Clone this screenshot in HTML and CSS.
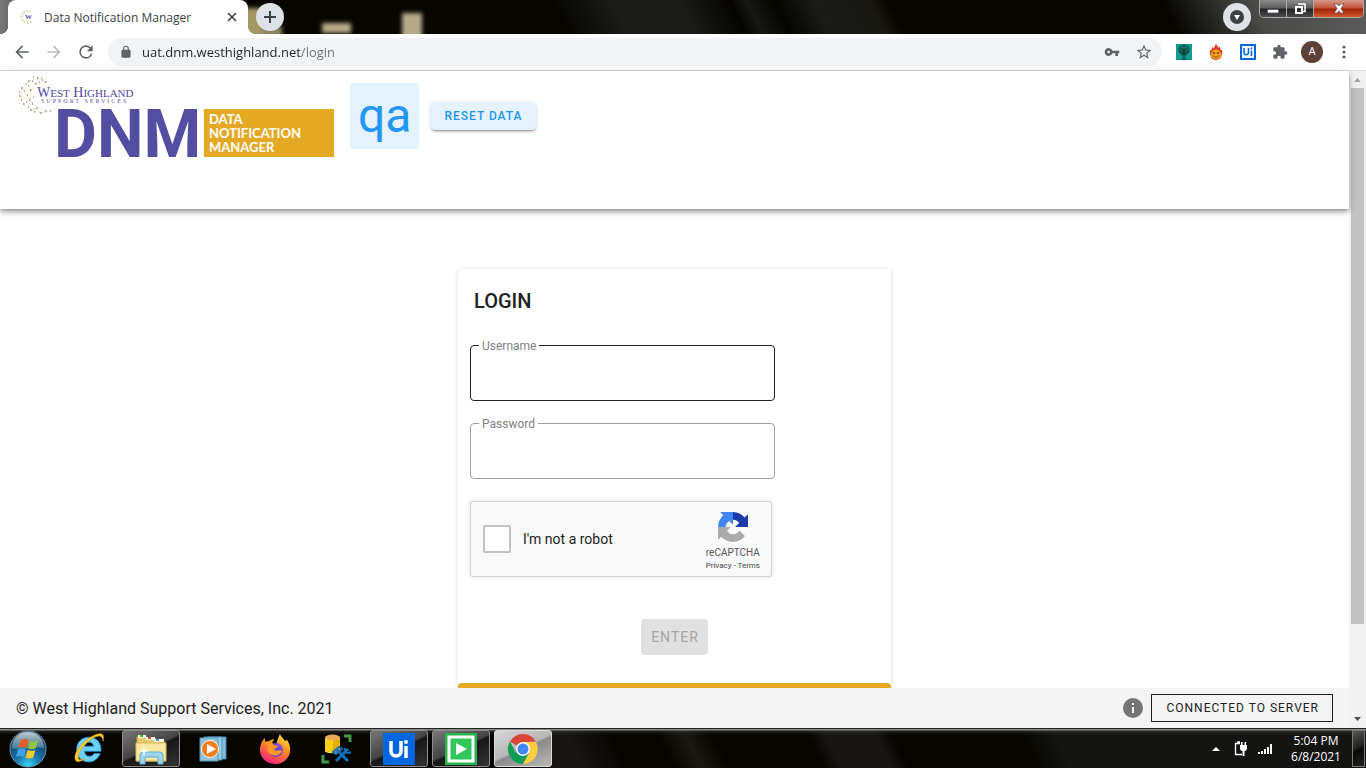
FILE: index.html
```html
<!DOCTYPE html>
<html lang="en">
<head>
<meta charset="utf-8">
<title>Data Notification Manager</title>
<link rel="stylesheet" href="styles.css">
</head>
<body>
<div class="titlebar">
  <svg class="glass" width="480" height="34" aria-hidden="true">
    <defs><filter id="soft"><feGaussianBlur stdDeviation="2"/></filter></defs>
    <g filter="url(#soft)" fill="#b5ab8b">
      <rect x="240" y="8" width="22" height="30" fill="#a39765"/>
      <rect x="262" y="26" width="20" height="12" fill="#8d8566"/>
      <rect x="322" y="23" width="29" height="10"/>
      <rect x="402" y="13" width="20" height="26"/>
    </g>
  </svg>
  <div class="tab">
    <svg class="favicon" viewBox="0 0 16 16" aria-hidden="true">
      <path d="M11 3A6 6 0 1 0 12 12" fill="none" stroke="#e4d6b0" stroke-width="2" stroke-dasharray="2 1"/>
      <text x="5" y="10" class="favicon-letter">W</text>
    </svg>
    <span class="tab-title">Data Notification Manager</span>
    <button class="tab-close" type="button" aria-label="Close tab">
      <svg width="10" height="10" viewBox="0 0 10 10"><path d="M1 1l8 8M9 1l-8 8" stroke="#3c4043" stroke-width="1.600"/></svg>
    </button>
  </div>
  <button class="round-button" type="button" aria-label="New tab">
    <svg width="14" height="14" viewBox="0 0 14 14"><path d="M7 1v12M1 7h12" stroke="#3c4043" stroke-width="2"/></svg>
  </button>
  <button class="round-button tab-search" type="button" aria-label="Search tabs">
    <svg width="14" height="14" viewBox="0 0 14 14"><circle cx="7" cy="7" r="7" fill="#3c4043"/><path d="M4 5h6l-3 5z" fill="#fff"/></svg>
  </button>
  <div class="window-controls">
    <button class="window-button" type="button" aria-label="Minimize">
      <svg width="14" height="14" viewBox="0 0 14 14"><path d="M1.500 7.500h11v3.500h-11z" fill="#fff" stroke="#555966" stroke-width=".8"/></svg>
    </button>
    <button class="window-button" type="button" aria-label="Restore">
      <svg width="14" height="14" viewBox="0 0 14 14"><path d="M5 2h7v7.500h-2" fill="none" stroke="#fff" stroke-width="1.500"/><path d="M3 5h6v6h-6z" fill="none" stroke="#fff" stroke-width="2"/></svg>
    </button>
    <button class="window-button window-close" type="button" aria-label="Close">
      <svg width="14" height="14" viewBox="0 0 14 14"><path d="M2 2h3.500l1.500 2 1.500-2h3.500l-3 4.500 3 4.500h-3.500l-1.500-2-1.500 2h-3.500l3-4.500z" fill="#fff" stroke="#5c3a3a" stroke-width=".7"/></svg>
    </button>
  </div>
</div>

<div class="toolbar">
  <button class="tool" type="button" aria-label="Back"><svg width="20" height="20" viewBox="0 0 24 24" fill="#5f6368"><path d="M20 11H7.830l5.590-5.590L12 4l-8 8 8 8 1.410-1.410L7.830 13H20v-2z"/></svg></button>
  <button class="tool" type="button" aria-label="Forward"><svg width="20" height="20" viewBox="0 0 24 24" fill="#babcbe"><path d="M12 4l-1.410 1.410L16.170 11H4v2h12.170l-5.580 5.590L12 20l8-8z"/></svg></button>
  <button class="tool" type="button" aria-label="Reload"><svg width="20" height="20" viewBox="0 0 24 24" fill="#5f6368"><path d="M17.650 6.350A7.960 7.960 0 0 0 12 4a8 8 0 1 0 7.730 10h-2.080A6 6 0 1 1 12 6c1.660 0 3.140.69 4.220 1.780L13 11h7V4z"/></svg></button>
  <div class="omnibox">
    <svg width="16" height="16" viewBox="-2 -2 28 28" fill="#5f6368" aria-hidden="true"><path d="M18 8h-1V6A5 5 0 0 0 7 6v2H6a2 2 0 0 0-2 2v10c0 1.100.9 2 2 2h12a2 2 0 0 0 2-2V10a2 2 0 0 0-2-2zM9 6a3 3 0 0 1 6 0v2H9z"/></svg>
    <input class="address" type="text" aria-label="Address" value="uat.dnm.westhighland.net/login">
    <button class="tool" type="button" aria-label="Saved passwords"><svg width="16" height="16" viewBox="0 0 24 24" fill="#5f6368"><path d="M12.650 10A6 6 0 1 0 12.650 14H17v4h4v-4h2v-4zM7 14a2 2 0 1 1 0-4 2 2 0 0 1 0 4z"/></svg></button>
    <button class="tool" type="button" aria-label="Bookmark"><svg width="18" height="18" viewBox="0 0 24 24" fill="#5f6368"><path d="M22 9.240l-7.190-.62L12 2 9.190 8.630 2 9.240l5.460 4.730L5.820 21 12 17.270 18.180 21l-1.630-7.030zM12 15.400l-3.760 2.270 1-4.280-3.320-2.880 4.380-.38L12 6.100l1.710 4.040 4.380.38-3.320 2.880 1 4.280z"/></svg></button>
  </div>
  <button class="tool" type="button" aria-label="Tree extension">
    <svg width="16" height="16" viewBox="0 0 16 16"><path d="M0 0h16v16H0z" fill="#109c93"/><circle cx="8" cy="6" r="5" fill="#0b7c72" stroke="#0d3b33"/><path d="M8 3v12M5 4l3 4 3-4M4 7l4 3 4-3M5.500 15h5" stroke="#0b2c28" fill="none"/></svg>
  </button>
  <button class="tool" type="button" aria-label="Flame extension">
    <svg width="16" height="16" viewBox="0 0 16 16"><path d="M8 0c1 2 2 2 2.500 4L12 2.500 12.500 6 14 6c.5 5-1 10-6 10S1.500 11 2 6l1.500.5L4 3l2 1.500C6 3 7 2 8 0z" fill="#e6361d"/><circle cx="8" cy="10.500" r="5" fill="#f8a51d"/><circle cx="6" cy="9" r="1" fill="#532"/><circle cx="10" cy="9" r="1" fill="#532"/><path d="M5 11.500c1.500 2.500 4.500 2.500 6 0" fill="none" stroke="#743013"/></svg>
  </button>
  <button class="tool" type="button" aria-label="UiPath extension">
    <svg width="16" height="16" viewBox="0 0 16 16"><path d="M1 1h14v14H1z" fill="#fff" stroke="#0067df" stroke-width="2"/><path d="M4 4v5a2.300 2.300 0 0 0 4.500 0V4M11.500 6.500V12M11.500 3.500v1.700" fill="none" stroke="#0067df" stroke-width="1.600"/></svg>
  </button>
  <button class="tool" type="button" aria-label="Extensions"><svg width="16" height="16" viewBox="0 0 24 24" fill="#5f6368"><path d="M20.500 11H19V7c0-1.100-.9-2-2-2h-4V3.500a2.500 2.500 0 0 0-5 0V5H4c-1.100 0-2 .9-2 2v3.800h1.500a2.700 2.700 0 0 1 0 5.400H2V20c0 1.100.9 2 2 2h3.800v-1.500a2.700 2.700 0 0 1 5.400 0V22H17a2 2 0 0 0 2-2v-4h1.500a2.500 2.500 0 0 0 0-5z"/></svg></button>
  <button class="tool" type="button" aria-label="Profile"><span class="avatar">A</span></button>
  <button class="tool" type="button" aria-label="Menu"><svg width="4" height="14" viewBox="0 0 4 14" fill="#5f6368"><circle cx="2" cy="2" r="1.600"/><circle cx="2" cy="7" r="1.600"/><circle cx="2" cy="12" r="1.600"/></svg></button>
</div>

<div class="viewport">
  <div class="page">
    <header class="app-header">
      <svg class="logo" width="319" height="84" viewBox="16 74 319 84" role="img" aria-label="West Highland Support Services DNM Data Notification Manager">
        <path d="M46 82L38 78 29 81 22 88 20 96 24 104 31 110 41 113 51 111M46 82L36 84 29 81 31 91 22 88M20 96l10 4 1-9 5-7M24 104l6-4 7 8-6 2M37 108l9 2M22 88l8 12M38 78l-2 6M31 110l6-2" fill="none" stroke="#eee0b0" stroke-width=".7"/>
        <path d="M45 82h1.500M37 78h1.500M33 77h1M42 80h1M41 78h1M28 81h1.500M32 81h1M26 84h1M21 88h1.500M30 90h1.500M24 91h1M27 95h1M19 96h1.500M19 92h1M29 100h1.500M33 97h1M23 104h1.500M26 102h1M30 110h1.500M28 107h1M36 108h1.500M34 112h1M40 113h1.500M45 111h1.500M50 111h1M35 84h1.500M39 82h1M21 100h1M28 86h1M32 104h1" stroke="#5f588c" stroke-width="1.200"/>
        <text class="logo-company" x="37" y="97">W<tspan class="logo-small">EST</tspan> H<tspan class="logo-small">IGHLAND</tspan></text>
        <text class="logo-services" x="41" y="103">SUPPORT SERVICES</text>
        <text class="logo-mark" x="54" y="157">DNM</text>
        <path d="M204 109h130v48H204z" fill="#e5a823"/>
        <g class="logo-words"><text x="209" y="124">DATA</text><text x="209" y="138">NOTIFICATION</text><text x="209" y="152">MANAGER</text></g>
      </svg>
      <span class="env">qa</span>
      <button class="btn btn-reset" type="button">RESET DATA</button>
    </header>
    <main class="content">
      <form class="card">
        <h1 class="card-title">LOGIN</h1>
        <div class="fields">
          <div class="field field-active">
            <label class="field-label" for="username">Username</label>
            <input class="field-input" id="username" type="text">
          </div>
          <div class="field">
            <label class="field-label" for="password">Password</label>
            <input class="field-input" id="password" type="password">
          </div>
          <div class="captcha">
            <input class="captcha-box" id="robot" type="checkbox">
            <label class="captcha-label" for="robot">I'm not a robot</label>
            <div class="captcha-brand">
              <svg width="30" height="30" viewBox="0 0 64 64" aria-hidden="true">
                <path fill="#1c3aa9" d="M64 31.955l-.033-1.370V4.687l-7.160 7.160C50.948 4.674 42.033.093 32.050.093c-10.400 0-19.630 4.960-25.474 12.640l11.736 11.860a15.550 15.550 0 0 1 4.754-5.334c2.050-1.600 4.952-2.906 8.968-2.906.485 0 .86.057 1.135.163 4.976.393 9.288 3.140 11.828 7.124l-8.307 8.307z"/>
                <path fill="#4285f4" d="M31.862.094l-1.370.033H4.594l7.160 7.160C4.580 13.147 0 22.060 0 32.046c0 10.400 4.960 19.630 12.640 25.474L24.500 45.784a15.550 15.550 0 0 1-5.334-4.754c-1.600-2.050-2.906-4.952-2.906-8.968 0-.485.057-.86.163-1.135.393-4.976 3.140-9.288 7.124-11.828l8.307 8.307z"/>
                <path fill="#ababab" d="M.001 32.045l.033 1.370v25.898l7.160-7.160c5.860 7.173 14.774 11.754 24.760 11.754 10.400 0 19.630-4.960 25.474-12.640l-11.736-11.860a15.550 15.550 0 0 1-4.754 5.334c-2.050 1.600-4.952 2.906-8.968 2.906-.485 0-.86-.057-1.135-.163-4.976-.393-9.288-3.140-11.828-7.124l8.307-8.307z"/>
              </svg>
              <span class="captcha-name">reCAPTCHA</span>
              <span class="captcha-links"><a href="#privacy">Privacy</a> - <a href="#terms">Terms</a></span>
            </div>
          </div>
        </div>
        <button class="btn btn-enter" type="submit" disabled>ENTER</button>
        <div class="card-strip"></div>
      </form>
    </main>
    <footer class="app-footer">
      <span>© West Highland Support Services, Inc. 2021</span>
      <svg class="info" width="20" height="20" viewBox="0 0 20 20" aria-hidden="true"><circle cx="10" cy="10" r="10" fill="#757575"/><path d="M9 5h2v2H9zM9 9h2v6H9z" fill="#f4f4f4"/></svg>
      <button class="btn btn-server" type="button">CONNECTED TO SERVER</button>
    </footer>
  </div>
  <div class="scrollbar" aria-hidden="true">
    <svg width="17" height="17" viewBox="0 0 17 17"><path d="M5 11l3.500-4 3.500 4z" fill="#a3a3a3"/></svg>
    <div class="scroll-track"><div class="scroll-thumb"></div></div>
    <svg width="17" height="17" viewBox="0 0 17 17"><path d="M5 6l3.500 4L12 6z" fill="#505050"/></svg>
  </div>
</div>

<nav class="taskbar" aria-label="Taskbar">
  <button class="start" type="button" aria-label="Start">
    <svg width="38" height="38" viewBox="0 0 38 38">
      <defs><radialGradient id="orb" cx=".5" cy=".95" r=".8"><stop offset="0" stop-color="#39d3f5"/><stop offset=".45" stop-color="#1a6fa5"/><stop offset="1" stop-color="#164163"/></radialGradient>
      <linearGradient id="gloss" x2="0" y2="1"><stop offset="0" stop-color="#fff" stop-opacity=".75"/><stop offset="1" stop-color="#9cc" stop-opacity=".35"/></linearGradient></defs>
      <circle cx="19" cy="19" r="18" fill="url(#orb)" stroke="#6f96ad"/>
      <path d="M3 18C3 8 10 2 19 2s16 6 16 16c-10-3-22 3-32 0z" fill="url(#gloss)"/>
      <path d="M12 10c3-1.500 5-1 7.500.3L17.500 18c-2.500-1.200-5-1.300-8-.3z" fill="#ee5a24"/>
      <path d="M21 10.800c3 1.400 5 1.200 8-.2l-2.200 7.600c-2.800 1.200-5 1.100-7.800 0z" fill="#8fc73e"/>
      <path d="M9 19.200c3-1 5.400-.8 8 .3L15 27c-2.500-1.200-5-1.300-8-.3z" fill="#3fa2e4"/>
      <path d="M18.600 20c2.700 1 5 1 7.800-.1l-2.200 7.600c-2.800 1.300-5 1.200-7.700-.1z" fill="#fcc92c"/>
    </svg>
  </button>
  <button class="task" type="button" aria-label="Internet Explorer">
    <svg width="36" height="36" viewBox="0 1 32 32">
      <path d="M26 21c-2 5-6 7.500-10 7.500C9.500 28.500 5 24 5 17.500 5 11 9.500 6.500 16 6.500c7 0 11 5 10.700 12.500H12c.3 3 2 4.500 4.500 4.500 2 0 3.200-1 4-2.500zM12 14.500h8c-.3-2.300-1.700-3.600-4-3.600-2.200 0-3.600 1.300-4 3.600z" fill="#6ccff6" stroke="#258bc9" stroke-width=".8"/>
      <path d="M28.500 10c1-4 .5-7-3-6.500C17 4 3 17 3.500 25c.2 5 5 3.500 9 .5-4 1.500-6 1.500-6-1.500C6.500 17 19 5 25.500 5.500c2 .2 2.500 2 3 4.500z" fill="#ffce29" stroke="#d99c15" stroke-width=".5"/>
    </svg>
  </button>
  <button class="task task-open" type="button" aria-label="File Explorer">
    <svg width="34" height="32" viewBox="0 0 34 32">
      <path d="M3 28V4h10l2 2h8l1 3h7v19z" fill="#e9c968" stroke="#c8a140"/>
      <path d="M4 2h8v3H4zM12 4h9v3h-9zM20 6h10v3H20z" fill="#fffbe5"/>
      <path d="M6 2h3v2H6z" fill="#3dbb3b"/><path d="M14 4h3v2h-3z" fill="#d94b30"/><path d="M22 6h3v2h-3z" fill="#4296de"/>
      <path d="M2 10h30v18H2z" fill="#f8e7a2" stroke="#dcbb60"/>
      <path d="M6 31v-8c0-3 1-4 4-4h15c3 0 4 1 4 4v8h-5v-7H11v7z" fill="#9fd5ed" stroke="#5eacd3"/>
      <path d="M10 12l1 5 4 1-4 1-1 5-1-5-4-1 4-1z" fill="#fff"/>
    </svg>
  </button>
  <button class="task" type="button" aria-label="Media Player">
    <svg width="28" height="28" viewBox="0 0 28 28">
      <path d="M9 2h18v22H9z" fill="#82bddd" stroke="#4488ad"/><path d="M5 2h18v23H5z" fill="#98cce6" stroke="#4c91b6"/><path d="M1 3h18v23H1z" fill="#8fc4df" stroke="#579abc"/>
      <circle cx="11" cy="14" r="8.500" fill="#f07c1e" stroke="#fff3e2"/><path d="M8 9l9 5-9 5z" fill="#fff"/>
    </svg>
  </button>
  <button class="task" type="button" aria-label="Firefox">
    <svg width="32" height="32" viewBox="0 0 32 32">
      <defs><linearGradient id="fox" x1=".8" y1="0" x2=".3" y2="1"><stop offset="0" stop-color="#ffe53b"/><stop offset=".45" stop-color="#ff8a1f"/><stop offset="1" stop-color="#f0207f"/></linearGradient></defs>
      <path d="M21 1c1 3 3 4 5 7l2-1c3 4 4 9 2.500 14C28 28 22 31 16 31 8 31 1 25 1 17c0-4 1-7 3-10l2-2v4l4-1c2-1 3-2 5-2l-2 4 4 2c1-4 2-7 4-11z" fill="url(#fox)"/>
      <circle cx="17" cy="17" r="7" fill="#7147c9"/><path d="M5 9c5-1 7 1 10 3l4 1c0 2-4 2-4 4 3 2 6-1 8 1-2 5-9 6-13 2-2-2-2-5-1-8z" fill="#ff9829"/><path d="M16 12c5-3 9 2 7 6 0-3-2-5-7-6z" fill="#9b53de"/>
    </svg>
  </button>
  <button class="task" type="button" aria-label="Database Tools">
    <svg width="32" height="32" viewBox="0 0 32 32">
      <path d="M4 4v14c0 3 15 3 15 0V4z" fill="#ffcf13"/><path d="M12 5h7v14h-7z" fill="#e5ae04"/><ellipse cx="11.500" cy="4.500" rx="7.500" ry="3" fill="#e9a95b"/>
      <path d="M23 3h6v6M2 22v7h6" fill="none" stroke="#429849" stroke-width="3"/>
      <path d="M15 16l12 12M27 16L15 28" stroke="#126fb8" stroke-width="3"/><path d="M12 19l6-5 3 2-6 5zM24 15c0 5 2 6 6 4" fill="none" stroke="#126fb8" stroke-width="2"/>
    </svg>
  </button>
  <button class="task task-open" type="button" aria-label="UiPath">
    <svg width="32" height="32" viewBox="0 0 32 32"><path d="M0 0h32v32H0z" fill="#0067df"/><path d="M8 8v10a5 5 0 0 0 10 0V8M23 13v12" fill="none" stroke="#fff" stroke-width="3.500"/><circle cx="23" cy="9" r="2" fill="#fff"/></svg>
  </button>
  <button class="task task-open" type="button" aria-label="Robot Runner">
    <svg width="32" height="32" viewBox="0 0 32 32"><path d="M0 0h32v32H0z" fill="#25b450"/><path d="M4 4h24v24H4z" fill="#32c75d" stroke="#fff" stroke-width="3"/><path d="M11 10l11 6-11 6z" fill="#fff"/></svg>
  </button>
  <button class="task task-open task-current" type="button" aria-label="Chrome">
    <svg width="32" height="32" viewBox="0 0 32 32">
      <path d="M16 16L3 8.500A15 15 0 0 1 29 8.500L16 9z" fill="#dc4437"/><path d="M3 8.500A15 15 0 0 0 16 31l7-11-7-4-7 4z" fill="#109d58"/><path d="M16 9h13a15 15 0 0 1-13 22l6-11z" fill="#ffcd40"/><circle cx="16" cy="16" r="7" fill="#fff"/><circle cx="16" cy="16" r="5.500" fill="#4285f4"/>
    </svg>
  </button>
  <div class="tray">
    <button class="tray-button" type="button" aria-label="Show hidden icons"><svg width="8" height="4" viewBox="0 0 8 4"><path d="M0 4l4-4 4 4z" fill="#fff"/></svg></button>
    <button class="tray-button" type="button" aria-label="Power"><svg width="14" height="16" viewBox="0 0 14 16"><path d="M6 2.500H1.500v11H8M3 1h3" fill="none" stroke="#fff" stroke-width="1.300"/><path d="M6 4h7v3c0 2-1 3-2.500 3v5h-2v-5C7 10 6 9 6 7zM7 1h1.500v3H7zM10.500 1H12v3h-1.500z" fill="#fff"/></svg></button>
    <button class="tray-button" type="button" aria-label="Network"><svg width="15" height="12" viewBox="0 0 15 12"><path d="M0 9h2v2H0zM3 8h2v3H3zM6 6h2v5H6zM9 4h2v7H9zM12 1h2v10h-2z" fill="#fff"/></svg></button>
  </div>
  <time class="clock" datetime="2021-06-08T17:04"><span>5:04 PM</span><span>6/8/2021</span></time>
  <button class="show-desktop" type="button" aria-label="Show desktop"></button>
</nav>
</body>
</html>
```
FILE: styles.css
```css
* { box-sizing: border-box; }

body {
  margin: 0;
  height: 100vh;
  display: flex;
  flex-direction: column;
  overflow: hidden;
  background: #fff;
  font-family: Roboto, "Liberation Sans", sans-serif;
  color: #212121;
}

button {
  margin: 0;
  padding: 0;
  border: 0;
  background: none;
  font-family: inherit;
}

svg { display: block; flex: none; }

/* Window title bar */
.titlebar {
  position: relative;
  flex: none;
  height: 34px;
  display: flex;
  padding-left: 8px;
  background:
    linear-gradient(90deg, #777 0, #666 12px, transparent 40px),
    linear-gradient(63deg, transparent 1050px, #4a4a48 1130px, #5c5c5c),
    linear-gradient(63deg, #060500 505px, #1b1b19 560px, #1b1b19 620px, #060500 665px, #171713 680px, #060500 705px, #1a1b17 740px, #181712 790px, #060500 805px);
}

.glass { position: absolute; left: 0; top: 0; }

.tab {
  position: relative;
  width: 240px;
  display: flex;
  align-items: center;
  padding: 0 8px 0 12px;
  border-radius: 8px 8px 0 0;
  background: #fff;
}

.tab::before,
.tab::after {
  content: "";
  position: absolute;
  bottom: 0;
  width: 8px;
  height: 8px;
}

.tab::before { right: 100%; background: radial-gradient(circle at 0 0, transparent 8px, #fff 8px); }
.tab::after { left: 100%; background: radial-gradient(circle at 100% 0, transparent 8px, #fff 8px); }

.favicon { width: 16px; height: 16px; }
.favicon-letter { font: 700 7px "Liberation Serif", serif; fill: #5b50a0; }

.tab-title {
  flex: 1;
  margin-left: 8px;
  font: 12px "Open Sans", "Noto Sans", sans-serif;
  color: #3c4043;
  white-space: nowrap;
}

.tab-close { width: 16px; height: 16px; display: grid; place-items: center; }

.round-button {
  position: relative;
  width: 28px;
  height: 28px;
  margin: 3px 0 0 8px;
  display: grid;
  place-items: center;
  border-radius: 50%;
  background: #dee1e6;
}

.tab-search { margin-left: auto; }

.window-controls {
  height: 18px;
  display: flex;
  margin: 0 2px 0 8px;
  border: 1px solid #aaa;
  border-top: 0;
  border-radius: 0 0 5px 5px;
  overflow: hidden;
}

.window-button {
  width: 27px;
  display: grid;
  place-items: center;
  border-right: 1px solid #aaa;
  background: linear-gradient(#8b8b8b, #5b5b5b 48%, #222 52%, #4b4b4b);
}

.window-close {
  width: 49px;
  border: 0;
  background: linear-gradient(#d69a8c, #c3533c 48%, #a22008 52%, #d05c30);
}

/* Browser toolbar */
.toolbar {
  flex: none;
  height: 37px;
  display: flex;
  align-items: center;
  padding: 0 6px;
  border-bottom: 1px solid #dadce0;
  background: #fff;
}

.tool { flex: none; width: 32px; height: 28px; display: grid; place-items: center; }

.omnibox {
  flex: 1;
  height: 28px;
  display: flex;
  align-items: center;
  margin: 0 6px;
  padding: 0 2px 0 10px;
  border-radius: 14px;
  background: #f1f3f4;
}

/* The host is dark, the path after it is grey */
.address {
  flex: 1;
  min-width: 0;
  margin-left: 8px;
  padding: 0;
  border: 0;
  outline: 0;
  font: 13px "Open Sans", "Noto Sans", sans-serif;
  color: #202124;
  background: linear-gradient(90deg, #202124 158px, #6b6f74 158px);
  background-clip: text;
  -webkit-text-fill-color: transparent;
}

.avatar {
  width: 22px;
  height: 22px;
  border-radius: 50%;
  background: #5d4037;
  color: #fff;
  font-size: 11px;
  line-height: 22px;
  text-align: center;
}

/* Web page */
.viewport { flex: 1; min-height: 0; display: flex; }
.page { flex: 1; min-width: 0; display: flex; flex-direction: column; }

.app-header {
  position: relative;
  flex: none;
  display: flex;
  align-items: flex-start;
  padding: 3px 16px 51px;
  background: #fff;
  box-shadow: 0 2px 4px -1px rgba(0, 0, 0, .3), 0 4px 5px rgba(0, 0, 0, .18), 0 1px 10px rgba(0, 0, 0, .12);
}

.logo-company { font: 14px "Liberation Serif", serif; fill: #514b9c; }
.logo-small { font-size: 11px; }
.logo-services { font: 6px "Liberation Serif", serif; letter-spacing: 2px; fill: #5b559f; }
.logo-mark { font: 700 66px Roboto, sans-serif; fill: #534ea1; }
.logo-words { font: 700 13px Lato, sans-serif; fill: #fff; }

.env {
  margin: 9px 12px 0 15px;
  padding: 0 8px;
  font-size: 48px;
  line-height: 66px;
  color: #2196f3;
  background: #e3f2fd;
}

.btn {
  height: 28px;
  border-radius: 4px;
  font-size: 12px;
  font-weight: 500;
  letter-spacing: 1px;
  white-space: nowrap;
}

.btn-reset {
  margin-top: 28px;
  padding: 0 13px;
  color: #2196f3;
  background: #e3f2fd;
  box-shadow: 0 3px 1px -2px rgba(0, 0, 0, .2), 0 2px 2px rgba(0, 0, 0, .14), 0 1px 5px rgba(0, 0, 0, .12);
}

.content { flex: 1; min-height: 0; overflow: hidden; padding-top: 60px; }

.card {
  max-width: 433px;
  margin: 0 auto;
  display: flex;
  flex-direction: column;
  border-radius: 4px;
  background: #fff;
  box-shadow: 0 3px 1px -2px rgba(0, 0, 0, .12), 0 1px 5px rgba(0, 0, 0, .15);
}

.card-title {
  margin: 0;
  padding: 16px 16px 0;
  font-size: 20px;
  font-weight: 500;
  line-height: 32px;
}

.fields { display: flex; flex-direction: column; gap: 22px; padding: 28px 12px 0; }

.field {
  position: relative;
  width: 305px;
  height: 56px;
  border: 1px solid #9e9e9e;
  border-radius: 4px;
}

.field-active { border-color: #212121; }

.field-label {
  position: absolute;
  top: -8px;
  left: 8px;
  padding: 0 3px;
  font-size: 12px;
  line-height: 16px;
  color: #808080;
  background: #fff;
}

.field-input {
  width: 100%;
  height: 100%;
  padding: 0 12px;
  border: 0;
  outline: 0;
  font: 16px Roboto, sans-serif;
  background: none;
}

.captcha {
  width: 302px;
  height: 76px;
  display: flex;
  align-items: center;
  padding: 0 11px 0 12px;
  border: 1px solid #d3d3d3;
  border-radius: 3px;
  background: #f9f9f9;
  box-shadow: 0 0 4px 1px rgba(0, 0, 0, .08);
}

.captcha-box {
  appearance: none;
  width: 28px;
  height: 28px;
  margin: 0 12px 0 0;
  border: 2px solid #c1c1c1;
  border-radius: 2px;
  background: #fff;
}

.captcha-label { flex: 1; font-size: 14px; color: #212121; }
.captcha-brand { display: flex; flex-direction: column; align-items: center; padding-top: 6px; color: #555; }
.captcha-name { margin-top: 4px; font-size: 10px; line-height: 14px; }
.captcha-links { font-size: 8px; line-height: 12px; color: #444; white-space: nowrap; }
.captcha-links a { color: inherit; text-decoration: none; }

.btn-enter {
  align-self: center;
  height: 36px;
  margin: 42px 0 28px;
  padding: 0 9px 0 10px;
  font-size: 14px;
  font-weight: 400;
  color: #a6a6a6;
  background: #e0e0e0;
}

.card-strip { height: 12px; border-radius: 4px; background: #e5a823; }

.app-footer {
  flex: none;
  height: 40px;
  display: flex;
  align-items: center;
  padding: 0 16px;
  font-size: 16px;
  background: #f4f4f4;
}

.info { margin: 0 8px 0 auto; }

.btn-server {
  padding: 0 13px 0 14px;
  border: 1px solid #212121;
  border-radius: 0;
  font-weight: 400;
  color: #212121;
}

.scrollbar { width: 17px; display: flex; flex-direction: column; background: #f1f1f1; }
.scroll-track { flex: 1; padding: 0 2px; }
.scroll-thumb { height: 86%; background: #c1c1c1; }

/* Taskbar */
.taskbar {
  flex: none;
  height: 40px;
  display: flex;
  gap: 4px;
  padding: 1px 1px 1px 0;
  border-top: 1px solid #222;
  background:
    linear-gradient(#8a8882 1px, rgba(60, 60, 52, .5) 2px, transparent 6px),
    linear-gradient(63deg, #060500 460px, #171612 500px, #171612 520px, #060500 560px, #060500 600px, #191813 625px, #060500 650px, #060500 735px, #171612 750px, #171612 795px, #060500 810px, #060500 925px, #141412 955px);
}

.start { width: 56px; display: grid; place-items: center; }
.task { width: 58px; display: grid; place-items: center; border-radius: 3px; }

.task-open {
  border: 1px solid #8d8d8d;
  background: linear-gradient(155deg, #777 0, #444 48%, #171717 52%, #333);
}

.task-current {
  border-color: #ddd;
  background: linear-gradient(155deg, #d8d8d8 0, #b5b5b5 48%, #8a8a8a 52%, #b9b9b9);
}

.tray { margin-left: auto; display: flex; align-items: center; }
.tray-button { width: 25px; height: 30px; display: grid; place-items: center; }

.clock {
  width: 66px;
  display: flex;
  flex-direction: column;
  justify-content: center;
  padding-left: 2px;
  text-align: center;
  font: 12px/16px "Open Sans", "Noto Sans", sans-serif;
  color: #fff;
}

.show-desktop {
  width: 13px;
  border: 1px solid #777;
  background: linear-gradient(155deg, #555, #222 45%, #080808 55%, #222);
}
```
